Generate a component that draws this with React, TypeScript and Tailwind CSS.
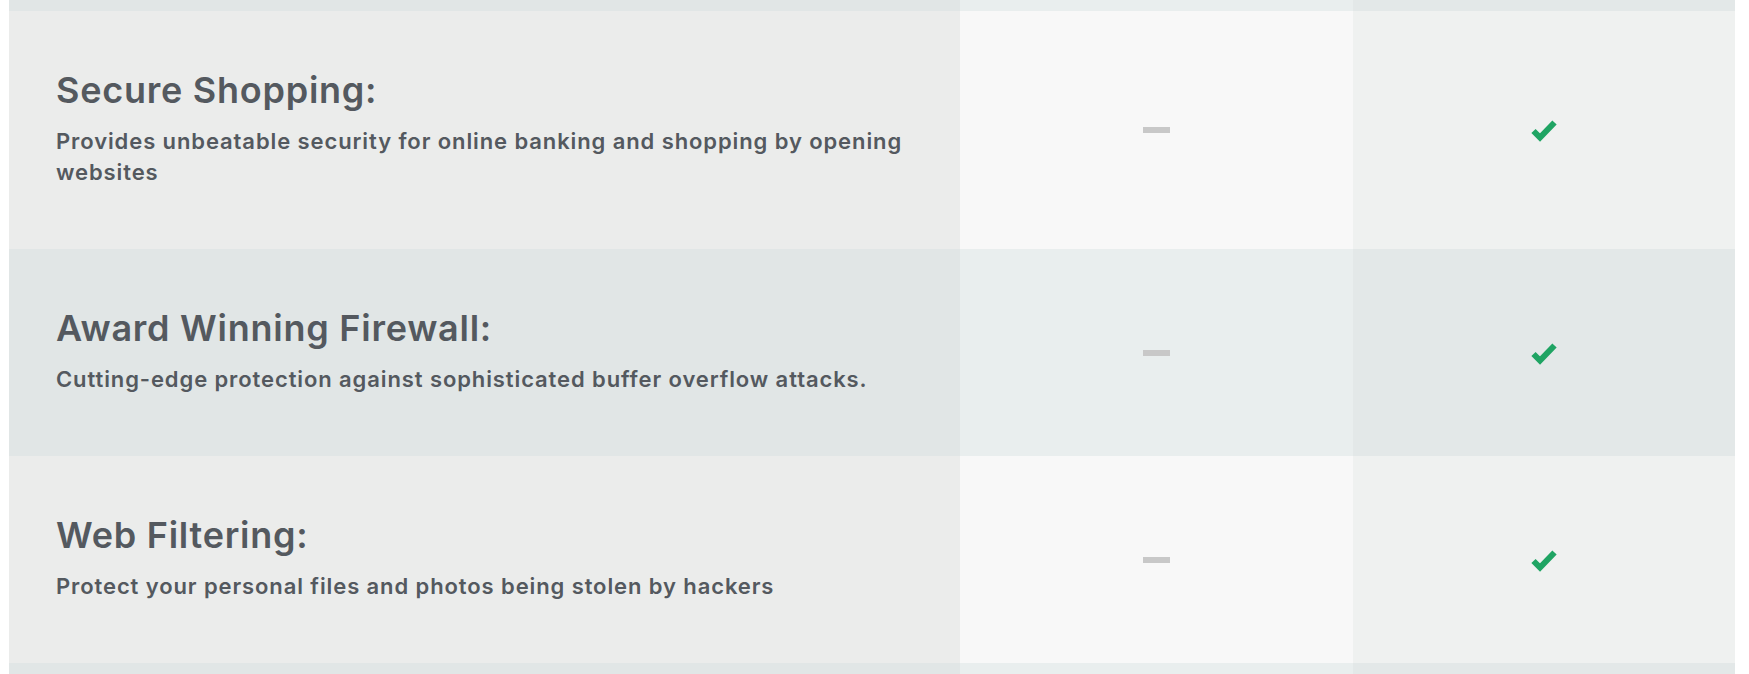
type Feature = {
	title: string
	text: string
}

const features: Feature[] = [
	{
		title: "Secure Shopping:",
		text: "Provides unbeatable security for online banking and shopping by opening websites",
	},
	{
		title: "Award Winning Firewall:",
		text: "Cutting-edge protection against sophisticated buffer overflow attacks.",
	},
	{
		title: "Web Filtering:",
		text: "Protect your personal files and photos being stolen by hackers",
	},
]

const cols = "grid grid-cols-[951px_393px_382px]"

function Check() {
	return (
		<svg width="28" height="24" viewBox="0 0 28 24" className="text-[#1fa463]">
			<polyline
				points="3.5,13 10,19.5 24.5,4.5"
				fill="none"
				stroke="currentColor"
				strokeWidth="6"
				strokeLinejoin="miter"
			/>
		</svg>
	)
}

function Strip() {
	return (
		<div className={`${cols} h-[11px]`}>
			<div className="bg-[#e1e6e6]" />
			<div className="bg-[#e9eeee]" />
			<div className="bg-[#e3e8e8]" />
		</div>
	)
}

function Row({ feature, shaded }: { feature: Feature; shaded: boolean }) {
	return (
		<div className={cols}>
			<div
				className={`pt-[59px] pb-[61px] pl-[47px] pr-[48px] ${shaded ? "bg-[#e1e6e6]" : "bg-[#ebeceb]"}`}
			>
				<h3 className="text-[36px] leading-[40px] font-semibold tracking-[0.75px]">
					{feature.title}
				</h3>
				<p className="mt-4 text-[22px] leading-[31px] font-semibold tracking-[0.9px]">
					{feature.text}
				</p>
			</div>
			<div
				className={`flex items-center justify-center ${shaded ? "bg-[#e9eeee]" : "bg-[#f8f8f8]"}`}
			>
				<span className="h-[6px] w-[27px] bg-[#c8c8c8]" />
			</div>
			<div
				className={`flex items-center justify-center ${shaded ? "bg-[#e3e8e8]" : "bg-[#eff1f0]"}`}
			>
				<Check />
			</div>
		</div>
	)
}

export default function App() {
	return (
		<div className="min-h-screen bg-white pl-[9px] font-['Inter',sans-serif] text-[#54595f]">
			<div className="w-[1726px]">
				<Strip />
				{features.map((f, i) => (
					<Row key={f.title} feature={f} shaded={i % 2 === 1} />
				))}
				<Strip />
			</div>
		</div>
	)
}
